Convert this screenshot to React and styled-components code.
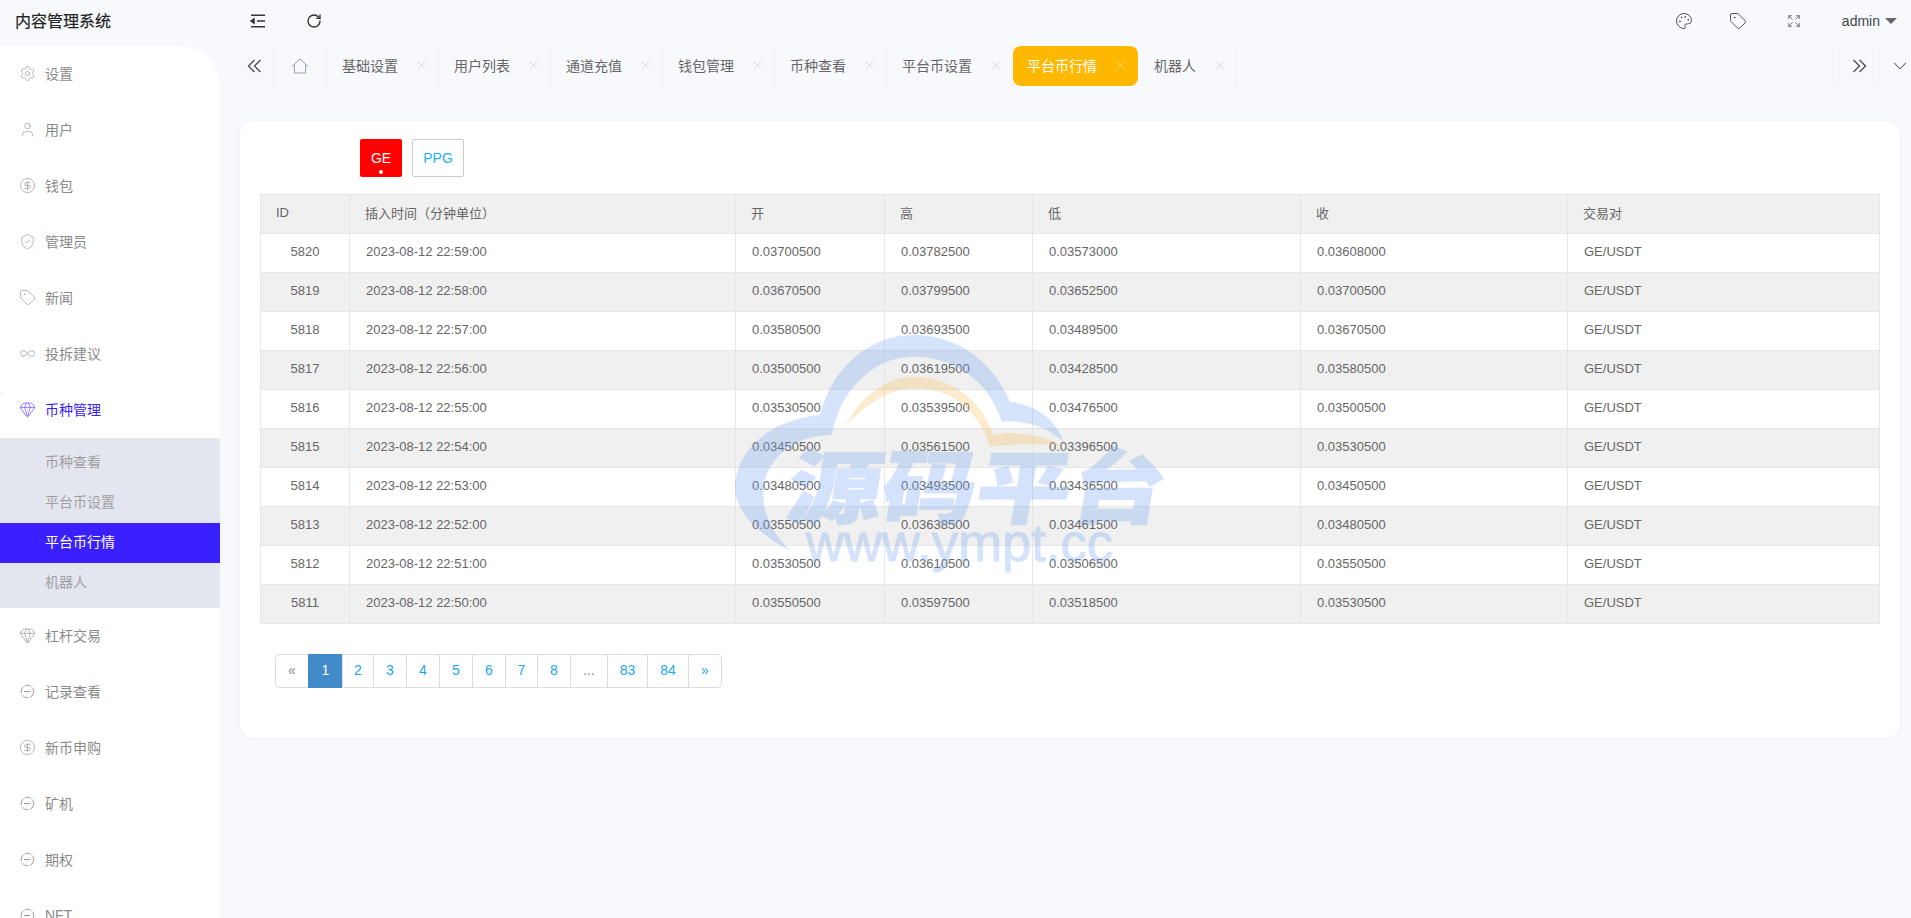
import React from 'react';
import styled, { createGlobalStyle } from 'styled-components';
import {
  Settings, User, CircleDollarSign, ShieldCheck, Tag, Infinity as InfinityIcon, Gem,
  ChevronDown, X, RotateCw, Palette, Expand,
} from 'lucide-react';

const FONT = '"Liberation Sans", "Noto Sans CJK SC", sans-serif';

const GlobalStyle = createGlobalStyle`
  html, body {
    margin: 0;
    height: 100%;
    overflow: hidden;
    background: #f8f9fd;
    font-family: ${FONT};
  }
  * { box-sizing: border-box; }
`;

const Page = styled.div`
  position: relative;
  width: 1911px;
  height: 918px;
  overflow: hidden;
  display: flex;
  flex-direction: column;
`;

const Header = styled.header`
  flex: none;
  height: 46px;
  display: flex;
  align-items: center;
`;

const Logo = styled.div`
  width: 220px;
  padding: 0 0 6px 15px;
  font-size: 16px;
  color: #222;
  -webkit-text-stroke: 0.2px #222;
`;

const HeaderLeft = styled.div`
  display: flex;
  align-items: center;
  gap: 40px;
  padding: 0 0 4px 30px;
  color: #333;
  flex: 1;
`;

const HeaderRight = styled.div`
  display: flex;
  align-items: center;
  padding: 0 14px 5px 0;
  color: #444;
`;

const HeaderIcon = styled.span`
  display: flex;
  margin-right: ${(p) => p.$gap}px;
`;

const AdminName = styled.span`
  font-size: 14px;
  color: #444;
`;

const Caret = styled.span`
  width: 0;
  height: 0;
  margin-left: 5px;
  border-left: 6px solid transparent;
  border-right: 6px solid transparent;
  border-top: 6px solid #666;
`;

const Body = styled.div`
  flex: 1;
  display: flex;
  min-height: 0;
`;

const Sidebar = styled.nav`
  flex: none;
  width: 220px;
  height: 900px;
  background: #fff;
  border-top-right-radius: 40px;
  color: #999;
`;

const MenuItem = styled.div`
  position: relative;
  height: 56px;
  display: flex;
  align-items: center;
  gap: 9px;
  padding: 0 0 2px 19px;
  font-size: 14px;
  color: ${(p) => (p.$open ? '#3a20ff' : '#8a8a8a')};
  svg { color: ${(p) => (p.$open ? '#6a4bff' : '#999')}; }
`;

const Notch = styled.span`
  position: absolute;
  left: 0;
  top: 10px;
  width: 5px;
  height: 3px;
  background: #f4f5fb;
`;

const SubMenu = styled.div`
  background: #e3e6ee;
  padding: 5px 0;
  border-radius: 0 2px 2px 0;
`;

const SubItem = styled.div`
  height: 40px;
  display: flex;
  align-items: center;
  padding: 0 0 4px 45px;
  font-size: 14px;
  color: ${(p) => (p.$active ? '#fff' : '#a0a0a0')};
  background: ${(p) => (p.$active ? '#3a20ff' : 'transparent')};
`;

const Main = styled.main`
  flex: 1;
  min-width: 0;
  padding-left: 20px;
  padding-right: 11px;
`;

const TabBar = styled.div`
  height: 40px;
  margin-right: -11px;
  margin-left: -7px;
  display: flex;
  align-items: stretch;
`;

const TabBtn = styled.div`
  flex: none;
  width: ${(p) => p.$w}px;
  padding-left: ${(p) => p.$pl || 0}px;
  display: flex;
  align-items: center;
  justify-content: center;
  color: ${(p) => p.$color || '#555'};
  border-right: ${(p) => (p.$line ? '1px solid #f2f3f7' : 'none')};
  border-left: ${(p) => (p.$lineLeft ? '1px solid #f2f3f7' : 'none')};
`;

const Tabs = styled.div`
  flex: 1;
  display: flex;
  min-width: 0;
`;

const Tab = styled.div`
  flex: none;
  display: flex;
  align-items: center;
  gap: 16px;
  font-size: 14px;
  height: 40px;
  border-radius: ${(p) => (p.$active ? '8px' : '0')};
  margin-left: ${(p) => (p.$active ? '1px' : '0')};
  padding: ${(p) => (p.$active ? '0 10px 2px 14px' : '0 8px 2px 16px')};
  background: ${(p) => (p.$active ? '#ffb800' : 'transparent')};
  color: ${(p) => (p.$active ? '#fff' : '#666')};
  border-right: ${(p) => (p.$active ? 'none' : '1px solid #f2f3f7')};
`;

const TabClose = styled(X)`
  flex: none;
  width: 15px;
  height: 15px;
  stroke-width: 1;
  color: ${(p) => (p.$active ? '#f5e3ad' : '#c8c8cc')};
`;

const Card = styled.section`
  margin-top: 35px;
  height: 617px;
  background: #fff;
  border-radius: 14px;
  box-shadow: 0 0 4px rgba(40, 60, 120, 0.05);
  padding: 18px 20px 0;
`;

const CoinRow = styled.div`
  display: flex;
  gap: 10px;
  padding-left: 100px;
  margin-bottom: 17px;
`;

const CoinButton = styled.button`
  position: relative;
  height: 38px;
  width: ${(p) => p.$w}px;
  padding: 0;
  font: 14px ${FONT};
  border-radius: 2px;
  border: ${(p) => (p.$active ? 'none' : '1px solid #ccc')};
  background: ${(p) => (p.$active ? '#f00' : '#fff')};
  color: ${(p) => (p.$active ? '#fff' : '#1cb0f6')};
`;

const Dot = styled.span`
  position: absolute;
  left: 50%;
  bottom: 3px;
  width: 4px;
  height: 4px;
  margin-left: -2px;
  border-radius: 50%;
  background: #fff;
`;

const Table = styled.table`
  width: 1619px;
  table-layout: fixed;
  border-collapse: collapse;
  font-size: 13px;
  color: #666;
`;

const Th = styled.th`
  height: 39px;
  padding: 0 16px 3px 15px;
  font-weight: 400;
  text-align: left;
  background: #f0f0f0;
  border: 1px solid #e6e6e6;
`;

const Td = styled.td`
  height: 39px;
  padding: 0 16px 3px;
  text-align: ${(p) => (p.$center ? 'center' : 'left')};
  border: 1px solid #e6e6e6;
`;

const Row = styled.tr`
  background: ${(p) => (p.$even ? '#f0f0f0' : '#fff')};
`;

const Pager = styled.div`
  display: flex;
  width: fit-content;
  margin: 30px 0 0 15px;
  height: 34px;
  font-size: 14px;
`;

const PageItem = styled.span`
  width: ${(p) => p.$w}px;
  padding-bottom: 2px;
  display: flex;
  align-items: center;
  justify-content: center;
  border: 1px solid #ddd;
  margin-left: -1px;
  color: ${(p) => (p.$active ? '#fff' : p.$muted ? '#888' : '#1ba6f5')};
  background: ${(p) => (p.$active ? '#428bca' : '#fff')};
  border-color: ${(p) => (p.$active ? '#428bca' : '#ddd')};
  &:first-child { border-radius: 4px 0 0 4px; margin-left: 0; }
  &:last-child { border-radius: 0 4px 4px 0; }
`;

const Watermark = styled.svg`
  position: absolute;
  left: 700px;
  top: 320px;
  pointer-events: none;
`;

const OutdentIcon = () => (
  <svg width="16" height="16" viewBox="0 0 16 16" fill="none" stroke="currentColor" strokeWidth="1.5">
    <path d="M1 2.2h14M7 8h8M1 13.8h14" />
    <path d="M1 8l3-2v4z" fill="currentColor" />
  </svg>
);

const DoubleChevron = ({ flip }) => (
  <svg width="15" height="14" viewBox="0 0 15 14" fill="none" stroke="#4a4f5c" strokeWidth="1.4"
    style={flip ? { transform: 'scaleX(-1)' } : undefined}>
    <path d="M7.5 1L1.5 7l6 6M13.5 1L7.5 7l6 6" />
  </svg>
);

const HomeIcon = () => (
  <svg width="18" height="16" viewBox="0 0 18 16" fill="none" stroke="#97a0b0" strokeWidth="1">
    <path d="M1 8.5L9 1l8 7.5M3.5 6.5v8.5h11V6.5" />
  </svg>
);

const RecordIcon = () => (
  <svg width="17" height="17" viewBox="0 0 17 17" fill="none" stroke="currentColor" strokeWidth="1" strokeDasharray="7 1.6">
    <circle cx="8.5" cy="8.5" r="6.3" />
    <path d="M5 8.5h6" strokeDasharray="none" />
    <circle cx="8" cy="8.5" r="0.8" fill="currentColor" stroke="none" />
  </svg>
);

const ic = { size: 17, strokeWidth: 1 };

const menuTop = [
  ['设置', <Settings {...ic} />],
  ['用户', <User {...ic} />],
  ['钱包', <CircleDollarSign {...ic} />],
  ['管理员', <ShieldCheck {...ic} />],
  ['新闻', <Tag {...ic} />],
  ['投拆建议', <InfinityIcon {...ic} />],
];

const menuBottom = [
  ['杠杆交易', <Gem {...ic} />],
  ['记录查看', <RecordIcon />],
  ['新币申购', <CircleDollarSign {...ic} />],
  ['矿机', <RecordIcon />],
  ['期权', <RecordIcon />],
  ['NFT', <RecordIcon />],
];

const subItems = ['币种查看', '平台币设置', '平台币行情', '机器人'];
const tabs = ['基础设置', '用户列表', '通道充值', '钱包管理', '币种查看', '平台币设置', '平台币行情', '机器人'];

const rows = [
  [5820, '22:59:00', '0.03700500', '0.03782500', '0.03573000', '0.03608000'],
  [5819, '22:58:00', '0.03670500', '0.03799500', '0.03652500', '0.03700500'],
  [5818, '22:57:00', '0.03580500', '0.03693500', '0.03489500', '0.03670500'],
  [5817, '22:56:00', '0.03500500', '0.03619500', '0.03428500', '0.03580500'],
  [5816, '22:55:00', '0.03530500', '0.03539500', '0.03476500', '0.03500500'],
  [5815, '22:54:00', '0.03450500', '0.03561500', '0.03396500', '0.03530500'],
  [5814, '22:53:00', '0.03480500', '0.03493500', '0.03436500', '0.03450500'],
  [5813, '22:52:00', '0.03550500', '0.03638500', '0.03461500', '0.03480500'],
  [5812, '22:51:00', '0.03530500', '0.03610500', '0.03506500', '0.03550500'],
  [5811, '22:50:00', '0.03550500', '0.03597500', '0.03518500', '0.03530500'],
];

const colWidths = [89, 386, 149, 148, 268, 267, 312];
const pages = [
  ['«', 34, 'muted'], ['1', 35, 'active'], ['2', 32], ['3', 34], ['4', 34], ['5', 34], ['6', 34], ['7', 33], ['8', 34],
  ['...', 38, 'muted'], ['83', 41], ['84', 42], ['»', 34],
];

const WM_BLUE = 'rgb(115,165,242)';

const App = () => (
  <Page>
    <GlobalStyle />
    <Header>
      <Logo>内容管理系统</Logo>
      <HeaderLeft>
        <OutdentIcon />
        <RotateCw size={16} strokeWidth={2} />
      </HeaderLeft>
      <HeaderRight>
        <HeaderIcon $gap={36}><Palette size={18} strokeWidth={1.2} /></HeaderIcon>
        <HeaderIcon $gap={40}><Tag size={18} strokeWidth={1.2} /></HeaderIcon>
        <HeaderIcon $gap={41}><Expand size={14} strokeWidth={1.2} /></HeaderIcon>
        <AdminName>admin</AdminName>
        <Caret />
      </HeaderRight>
    </Header>
    <Body>
      <Sidebar>
        {menuTop.map(([label, icon]) => (
          <MenuItem key={label}>{icon}{label}</MenuItem>
        ))}
        <MenuItem $open>
          <Notch />
          <Gem {...ic} />
          币种管理
        </MenuItem>
        <SubMenu>
          {subItems.map((s) => (
            <SubItem key={s} $active={s === '平台币行情'}>{s}</SubItem>
          ))}
        </SubMenu>
        {menuBottom.map(([label, icon]) => (
          <MenuItem key={label}>{icon}{label}</MenuItem>
        ))}
      </Sidebar>
      <Main>
        <TabBar>
          <TabBtn $w={41} $pl={3} $line><DoubleChevron /></TabBtn>
          <TabBtn $w={52} $line><HomeIcon /></TabBtn>
          <Tabs>
            {tabs.map((t) => (
              <Tab key={t} $active={t === '平台币行情'}>
                {t}
                <TabClose $active={t === '平台币行情'} />
              </Tab>
            ))}
          </Tabs>
          <TabBtn $w={41} $lineLeft $line><DoubleChevron flip /></TabBtn>
          <TabBtn $w={31} $pl={9}><ChevronDown size={22} strokeWidth={1.1} /></TabBtn>
        </TabBar>
        <Card>
          <CoinRow>
            <CoinButton $active $w={42}>GE<Dot /></CoinButton>
            <CoinButton $w={52}>PPG</CoinButton>
          </CoinRow>
          <Table>
            <colgroup>
              {colWidths.map((w, i) => <col key={i} width={w} />)}
            </colgroup>
            <thead>
              <tr>
                {['ID', '插入时间（分钟单位）', '开', '高', '低', '收', '交易对'].map((h) => <Th key={h}>{h}</Th>)}
              </tr>
            </thead>
            <tbody>
              {rows.map((r, i) => (
                <Row key={r[0]} $even={i % 2 === 1}>
                  <Td $center>{r[0]}</Td>
                  <Td>2023-08-12 {r[1]}</Td>
                  <Td>{r[2]}</Td>
                  <Td>{r[3]}</Td>
                  <Td>{r[4]}</Td>
                  <Td>{r[5]}</Td>
                  <Td>GE/USDT</Td>
                </Row>
              ))}
            </tbody>
          </Table>
          <Pager>
            {pages.map(([label, w, kind]) => (
              <PageItem key={label} $w={w} $active={kind === 'active'} $muted={kind === 'muted'}>{label}</PageItem>
            ))}
          </Pager>
        </Card>
      </Main>
    </Body>
    <Watermark width="500" height="270" viewBox="0 0 1500 810">
      <path
        fill={WM_BLUE}
        opacity="0.3"
        d="M270 692C170 640 105 570 105 505C105 400 200 300 360 285C400 130 520 45 640 45C780 45 880 130 930 245C1010 255 1070 300 1090 365C1040 320 980 300 905 305C870 190 770 110 640 110C520 110 420 210 395 345C280 345 190 420 190 520C190 590 220 640 270 692Z"
      />
      <path
        fill="rgb(250,190,90)"
        opacity="0.3"
        d="M435 320C480 230 560 170 640 170C760 170 850 250 880 345C950 330 1030 345 1090 380C1030 370 950 370 870 382C840 280 760 205 650 205C560 205 490 260 435 320Z"
      />
      <g opacity="0.3" fill={WM_BLUE} stroke={WM_BLUE}>
        <text
          x="0" y="0" fontSize="240" fontWeight="900" strokeWidth="4"
          fontFamily='"Noto Sans CJK SC", sans-serif'
          transform="translate(252 592) skewX(-9) scale(1.18 1)"
        >源码平台</text>
        <text
          x="318" y="722" fontSize="158" strokeWidth="3" fontFamily='"Liberation Sans", sans-serif'
        >www.ympt.cc</text>
      </g>
    </Watermark>
  </Page>
);

export default App;
